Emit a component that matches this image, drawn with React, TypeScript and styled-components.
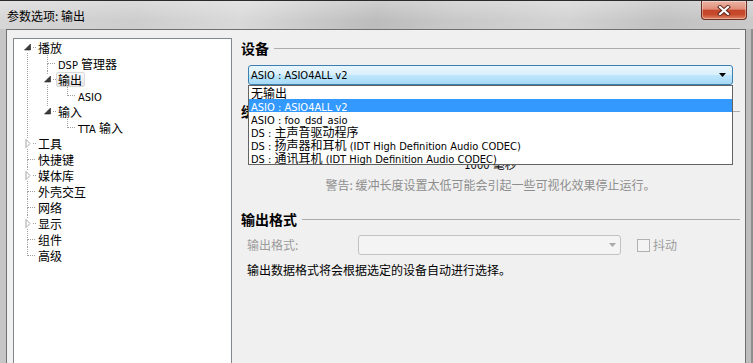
import React from "react"
import styled, { createGlobalStyle } from "styled-components"

// Win7 "Preferences: Output" dialog

const GlobalStyle = createGlobalStyle`
  html, body {
    margin: 0;
    padding: 0;
    width: 753px;
    height: 363px;
    overflow: hidden;
  }
  body {
    font-family: "Noto Sans CJK SC", "DejaVu Sans", sans-serif;
    font-size: 12px;
    color: #000;
  }
`

const Window = styled.div`
  width: 753px;
  height: 363px;
  display: flex;
  flex-direction: column;
  background: linear-gradient(90deg, #c6c6c6 0%, #bdbdbd 100%);
  box-shadow: inset -2px 0 0 #8f8f8f;
  overflow: hidden;
`

const TitleBar = styled.div`
  height: 29px;
  flex: none;
  display: flex;
  align-items: flex-start;
  box-sizing: border-box;
  border-top: 1px solid #2a2a2a;
  background: linear-gradient(180deg, rgba(255, 255, 255, 0.28), rgba(255, 255, 255, 0) 70%),
    linear-gradient(100deg, #d6d6d6 0%, #cdcdcd 18%, #d9d9d9 32%, #bcbcbc 50%, #c8c8c8 60%, #d3d3d3 75%, #c1c1c1 88%, #cacaca 100%);
`

const Title = styled.div`
  padding: 7px 0 0 7px;
  line-height: 16px;
  font-size: 12px;
  flex: 1;
`

const CloseButton = styled.div`
  width: 46px;
  height: 19px;
  margin: 0 6px 0 0;
  box-sizing: border-box;
  border: 1px solid #6a2e22;
  border-top: none;
  border-radius: 0 0 4px 4px;
  display: flex;
  align-items: center;
  justify-content: center;
  background: linear-gradient(180deg, #ecb5a7 0%, #df8d78 45%, #c4452a 52%, #c84a2d 75%, #e08468 100%);
  box-shadow: inset 0 0 0 1px rgba(255, 255, 255, 0.35);
`

const Client = styled.div`
  flex: 1;
  min-height: 0;
  margin: 0 7px 0 6px;
  display: flex;
  box-sizing: border-box;
  border: 1px solid #6f6f6f;
  border-bottom: none;
  background: #f0f0f0;
  padding: 8px 5px 0 6px;
`

const Tree = styled.div`
  width: 219px;
  flex: none;
  box-sizing: border-box;
  border: 1px solid #828790;
  border-bottom: none;
  background: #fff;
`

const TreeItem = styled.div`
  height: 16px;
  display: flex;
  align-items: center;
`

const TreeLabel = styled.span<{ $selected?: boolean }>`
  height: 15px;
  line-height: 13px;
  box-sizing: border-box;
  padding: 0 2px 0 1px;
  border: 1px solid ${(p) => (p.$selected ? "#d9d9d9" : "transparent")};
  border-radius: 2px;
  background: ${(p) => (p.$selected ? "linear-gradient(180deg, #fafafa, #e6e6e6)" : "transparent")};
  white-space: nowrap;
`

// Latin runs are set in a Tahoma-like face, CJK runs stay 12px
const Latin = styled.span`
  font-family: "DejaVu Sans", "Noto Sans CJK SC", sans-serif;
  font-stretch: condensed;
  font-size: 11px;
`

const RightPanel = styled.div`
  flex: 1;
  margin-left: 9px;
  display: flex;
  flex-direction: column;
`

const SectionHeading = styled.div<{ $top: number }>`
  margin-top: ${(p) => p.$top}px;
  height: 16px;
  display: flex;
  align-items: center;
  gap: 5px;
  font-size: 14px;
  font-weight: 700;
  line-height: 16px;
  white-space: nowrap;

  &::after {
    content: "";
    flex: 1;
    height: 1px;
    background: #adadad;
  }
`

const ComboWrap = styled.div`
  position: relative;
  margin: 9px 7px 0 7px;
`

const DeviceCombo = styled.div`
  height: 20px;
  box-sizing: border-box;
  border: 1px solid #3c7fb1;
  border-radius: 3px;
  padding: 0 6px 0 2px;
  display: flex;
  align-items: center;
  justify-content: space-between;
  line-height: 16px;
  background: linear-gradient(180deg, #eaf6fd 0%, #d9f0fc 48%, #bee6fd 52%, #a7d9f5 100%);
`

const DropList = styled.div`
  position: absolute;
  left: 0;
  right: 0;
  top: 100%;
  z-index: 2;
  border: 1px solid #646464;
  background: #fff;
`

const DropItem = styled.div<{ $active?: boolean }>`
  height: 13px;
  line-height: 13px;
  padding-left: 2px;
  white-space: nowrap;
  background: ${(p) => (p.$active ? "#3399ff" : "transparent")};
  color: ${(p) => (p.$active ? "#fff" : "#000")};
`

const CenterNote = styled.div<{ $top: number; $muted?: boolean }>`
  margin-top: ${(p) => p.$top}px;
  text-align: center;
  line-height: 14px;
  color: ${(p) => (p.$muted ? "#8e8e8e" : "#000")};
`

const FormatRow = styled.div`
  margin-top: 8px;
  height: 20px;
  display: flex;
  align-items: center;
  padding-left: 6px;
`

const MutedLabel = styled.span<{ $width?: number }>`
  color: #9c9c9c;
  line-height: 14px;
  ${(p) => (p.$width ? `width: ${p.$width}px;` : "")}
  flex: none;
`

const DisabledCombo = styled.div`
  width: 263px;
  height: 20px;
  box-sizing: border-box;
  border: 1px solid #c2c2c2;
  border-radius: 3px;
  background: #f4f4f4;
  display: flex;
  align-items: center;
  justify-content: flex-end;
  padding-right: 4px;
`

const CheckBox = styled.span`
  width: 13px;
  height: 13px;
  box-sizing: border-box;
  border: 1px solid #b1b1b1;
  background: #f4f4f4;
  margin: 0 3px 0 16px;
  flex: none;
`

const InfoText = styled.div`
  margin-top: 8px;
  padding-left: 6px;
  line-height: 14px;
`

const CJK = /[\u2E80-\u9FFF\uFF00-\uFFEF\u3000-\u303F]/

function Mixed({ text }: { text: string }) {
  const parts = text.split(/([\u2E80-\u9FFF\uFF00-\uFFEF\u3000-\u303F]+)/).filter(Boolean)
  return (
    <>
      {parts.map((p, i) => (CJK.test(p) ? <span key={i}>{p}</span> : <Latin key={i}>{p}</Latin>))}
    </>
  )
}

type Row = {
  label: string
  level: number
  exp?: "open" | "closed"
  first?: boolean
  last?: boolean
  selected?: boolean
  anc: boolean[]
}

const rows: Row[] = [
  { label: "播放", level: 0, exp: "open", first: true, anc: [] },
  { label: "DSP 管理器", level: 1, anc: [true] },
  { label: "输出", level: 1, exp: "open", anc: [true], selected: true },
  { label: "ASIO", level: 2, anc: [true, true], last: true },
  { label: "输入", level: 1, exp: "open", anc: [true], last: true },
  { label: "TTA 输入", level: 2, anc: [true, false], last: true },
  { label: "工具", level: 0, exp: "closed", anc: [] },
  { label: "快捷键", level: 0, anc: [] },
  { label: "媒体库", level: 0, exp: "closed", anc: [] },
  { label: "外壳交互", level: 0, anc: [] },
  { label: "网络", level: 0, anc: [] },
  { label: "显示", level: 0, exp: "closed", anc: [] },
  { label: "组件", level: 0, anc: [] },
  { label: "高级", level: 0, anc: [], last: true },
]

const devices = [
  "无输出",
  "ASIO : ASIO4ALL v2",
  "ASIO : foo_dsd_asio",
  "DS : 主声音驱动程序",
  "DS : 扬声器和耳机 (IDT High Definition Audio CODEC)",
  "DS : 通讯耳机 (IDT High Definition Audio CODEC)",
]

const DOT = { stroke: "#a0a0a0", strokeWidth: 1, strokeDasharray: "1 1" }

function Guides({ row }: { row: Row }) {
  const w = 22 + 20 * row.level
  const cx = 13 + 20 * row.level + 0.5
  const cy = 8.5
  const gap = row.exp ? 5 : 0
  return (
    <svg width={w} height={16} shapeRendering="crispEdges" style={{ flex: "none" }}>
      {row.anc.map((c, i) =>
        c ? <line key={i} x1={13 + 20 * i + 0.5} y1={0} x2={13 + 20 * i + 0.5} y2={16} {...DOT} /> : null
      )}
      {!row.first && <line x1={cx} y1={0} x2={cx} y2={cy - gap} {...DOT} />}
      {!row.last && <line x1={cx} y1={cy + gap} x2={cx} y2={16} {...DOT} />}
      <line x1={cx + gap} y1={cy} x2={w} y2={cy} {...DOT} />
      {row.exp === "open" && (
        <polygon
          points={`${cx + 3},${cy - 3.5} ${cx + 3},${cy + 2.5} ${cx - 3},${cy + 2.5}`}
          fill="#3a3a3a"
          stroke="#262626"
          strokeWidth={0.6}
          shapeRendering="auto"
        />
      )}
      {row.exp === "closed" && (
        <polygon
          points={`${cx - 1.5},${cy - 4} ${cx + 2.5},${cy} ${cx - 1.5},${cy + 4}`}
          fill="#fff"
          stroke="#a6a6a6"
          strokeWidth={1}
          shapeRendering="auto"
        />
      )}
    </svg>
  )
}

function Arrow({ color }: { color: string }) {
  return (
    <svg width={7} height={4} style={{ flex: "none" }}>
      <polygon points="0,0 7,0 3.5,4" fill={color} />
    </svg>
  )
}

export default function App() {
  return (
    <>
      <GlobalStyle />
      <Window>
        <TitleBar>
          <Title>参数选项: 输出</Title>
          <CloseButton>
            <svg width={14} height={11}>
              <g strokeLinecap="square">
                <path d="M3 2 L11 9 M11 2 L3 9" stroke="#5a2418" strokeWidth={4} />
                <path d="M3 2 L11 9 M11 2 L3 9" stroke="#fff" strokeWidth={2.2} />
              </g>
            </svg>
          </CloseButton>
        </TitleBar>
        <Client>
          <Tree>
            {rows.map((r) => (
              <TreeItem key={r.label}>
                <Guides row={r} />
                <TreeLabel $selected={r.selected}>
                  <Mixed text={r.label} />
                </TreeLabel>
              </TreeItem>
            ))}
          </Tree>
          <RightPanel>
            <SectionHeading $top={2}>设备</SectionHeading>
            <ComboWrap>
              <DeviceCombo>
                <span>
                  <Mixed text="ASIO : ASIO4ALL v2" />
                </span>
                <Arrow color="#000" />
              </DeviceCombo>
              <DropList>
                {devices.map((d, i) => (
                  <DropItem key={d} $active={i === 1}>
                    <Mixed text={d} />
                  </DropItem>
                ))}
              </DropList>
            </ComboWrap>
            <SectionHeading $top={18}>缓冲</SectionHeading>
            <CenterNote $top={38}>
              <Mixed text="1000 毫秒" />
            </CenterNote>
            <CenterNote $top={5} $muted>
              警告: 缓冲长度设置太低可能会引起一些可视化效果停止运行。
            </CenterNote>
            <SectionHeading $top={19}>输出格式</SectionHeading>
            <FormatRow>
              <MutedLabel $width={111}>输出格式:</MutedLabel>
              <DisabledCombo>
                <Arrow color="#a9a9a9" />
              </DisabledCombo>
              <CheckBox />
              <MutedLabel>抖动</MutedLabel>
            </FormatRow>
            <InfoText>输出数据格式将会根据选定的设备自动进行选择。</InfoText>
          </RightPanel>
        </Client>
      </Window>
    </>
  )
}
